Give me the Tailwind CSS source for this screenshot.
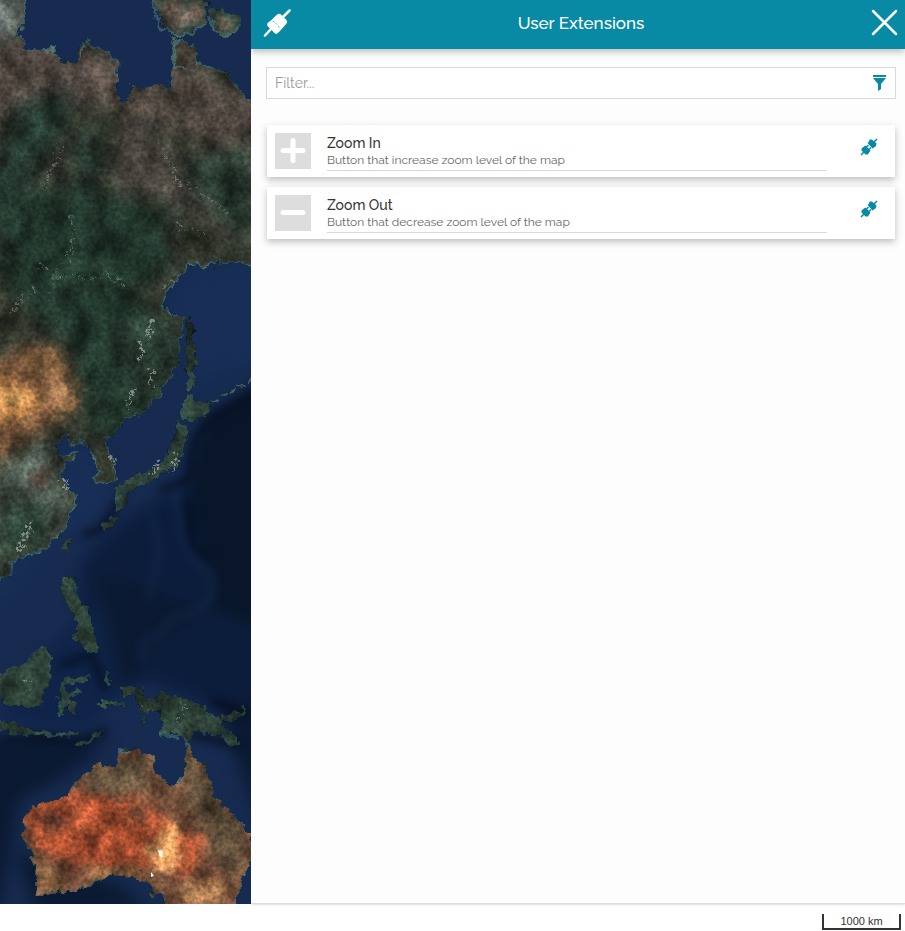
<!DOCTYPE html>
<html lang="en">
<head>
<meta charset="utf-8">
<meta name="viewport" content="width=device-width, initial-scale=1">
<title>User Extensions</title>
<script src="https://cdn.jsdelivr.net/npm/@tailwindcss/browser@4"></script>
</head>
<body class="flex min-h-screen flex-col bg-white font-[Raleway,Lato,sans-serif] text-[#333]">
<svg class="hidden" aria-hidden="true">
  <symbol id="plug" viewBox="0 0 18 18">
    <path d="M1 17 4 14M17 1l-3 3M6.500 9 8.500 7M9 11.500l2-2" stroke="currentColor" stroke-width="1.500" fill="none"/>
    <path d="M1.500 10.500 4 8.500l1.500-1L10.500 12.500 9.500 14 8 16.500 5.500 16.500 1.500 12.500z" fill="currentColor"/>
    <path d="M7.500 5 9 3.500 9.500 1.500 12 1.500 16.500 5.500 16 8 14 9.500 12.500 10.500z" fill="currentColor"/>
  </symbol>
</svg>
<main class="flex flex-1">
  <div class="relative w-[251px] shrink-0 overflow-hidden bg-[#12264b]">
    <svg class="absolute inset-0 h-full w-full" viewBox="0 0 251 904" preserveAspectRatio="xMidYMid slice" role="img" aria-label="Satellite map">
      <defs>
        <filter id="coast" x="-5%" y="-5%" width="110%" height="110%" color-interpolation-filters="sRGB"><feTurbulence type="fractalNoise" baseFrequency=".12" numOctaves="4" seed="4"/><feDisplacementMap in="SourceGraphic" scale="10" xChannelSelector="R" yChannelSelector="G"/></filter>
        <filter id="terrain" filterUnits="userSpaceOnUse" x="0" y="0" width="251" height="904" color-interpolation-filters="sRGB">
          <feTurbulence type="fractalNoise" baseFrequency=".12" numOctaves="4" seed="4"/>
          <feDisplacementMap in="SourceGraphic" scale="11" xChannelSelector="R" yChannelSelector="G" result="shape"/>
          <feTurbulence type="fractalNoise" baseFrequency=".25" numOctaves="4" seed="7"/>
          <feColorMatrix values="1 0 0 0 0  .8 .2 0 0 0  .8 0 .2 0 0  0 0 0 0 1" result="grain"/>
          <feComposite in="shape" in2="grain" operator="arithmetic" k1=".8" k2=".6" result="fine"/>
          <feTurbulence type="fractalNoise" baseFrequency=".045 .035" numOctaves="5" seed="12"/>
          <feColorMatrix values="1 0 0 0 0  1 0 0 0 0  1 0 0 0 0  0 0 0 0 1" result="mottle"/>
          <feComposite in="fine" in2="mottle" operator="arithmetic" k1="1.2" k2=".34"/>
        </filter>
        <filter id="soft" x="-50%" y="-50%" width="200%" height="200%" color-interpolation-filters="sRGB"><feGaussianBlur stdDeviation="8"/></filter>
        <filter id="haze" x="-50%" y="-50%" width="200%" height="200%" color-interpolation-filters="sRGB"><feGaussianBlur stdDeviation="4"/></filter>
        <filter id="speck" x="-20%" y="-20%" width="140%" height="140%" color-interpolation-filters="sRGB"><feTurbulence type="fractalNoise" baseFrequency=".2" numOctaves="3" seed="9"/><feDisplacementMap in="SourceGraphic" scale="16" xChannelSelector="R" yChannelSelector="G"/><feGaussianBlur stdDeviation=".6"/></filter>
        <path id="asia" d="M-9-9H27L25 18 22 28 14 35 24 36 24 50 40 51 48 48 57 55 62 63 78 62 80 45 87 40 93 47 106 50 117 62 116 92 124 105 129 100 132 85 140 90 160 85 170 90 173 72 172 40 182 38 195 48 197 63 225 72 235 85 248 100 261 103V270L240 262 225 262 205 266 190 264 180 275 165 295 160 303 170 312 183 318 181 340 177 365 160 395 140 415 125 418 115 432 104 440 113 460 115 480 105 485 95 480 97 465 88 445 80 440 68 445 70 432 55 447 60 455 77 455 63 467 62 480 75 497 76 505 65 530 45 548 25 557 10 562 10 575-9 582Z"/>
        <path id="isles" d="M150-9H205L207 20 193 35 178 36 166 30 160 17ZM209 12 220 8 240 17 239 29 230 37 215 31ZM190 313l3 17v25l5 7-6 8 3 15-7 5-1-20-1-30 2-20ZM188 393l12 10 13 2-8 10-12 5-13-3 4-12ZM178 420l8 10-3 20-5 15-13 7-15 10-15 5-15 8 5-15 20-7 15-8 10-15 5-15ZM118 485l10 7-3 13-9 5-1-15ZM66 540l6-3-4 16-6-5ZM65 578h10l-1 17 6 8 7 5 9 32 1 10-9 2-8-12h-8l8-15-12-20-7-13ZM-9 676 25 663 42 646 52 658 50 680 40 706 20 706 3 700-9 690ZM62 680l28-5-2 7-23 2v8l17-2-12 7 8 15-6 3-6-13-4 16-4-2 2-21ZM-9 722l29 2 10 6 30 4 20-1v3l-30 1-59-7ZM78 745l24-15-2 6-20 11ZM96 701l30 2-3 4-27-2ZM105 670l6 10-4 6ZM143 712l3 10-4 2ZM122 687l18 1 3 12 22-7 30 9 20 15 25 25-8 3-17-10-15-5-12 10-13-7h-15l5-11-7-10-18-2-5-15-13 2ZM220 716l22-4 2-6 3 5-10 9-16 1ZM102 525l10-8 6 2-12 11Z"/>
        <path id="australia" d="M25 813 30 808 50 802 66 798 75 782 88 772 98 764 116 768 120 750 135 750 153 755 153 770 165 782 178 787 184 780 186 750 189 742 193 757 205 765 212 795 230 812 248 830 251 838V860L240 885 235 912H172L160 893 155 896 150 885 140 878 115 875 90 885 75 892 58 890 48 896 37 895 35 880 36 868 28 845 23 835Z"/>
        <clipPath id="land"><use href="#asia"/><use href="#isles"/><use href="#australia"/></clipPath>
        <clipPath id="oz"><use href="#australia"/></clipPath>
      </defs>
      <rect width="251" height="904" fill="#172b50"/>
      <g filter="url(#soft)">
        <path d="M270 385 205 415 193 460 186 485 130 515 82 560 78 640 105 700 150 680 270 730Z" fill="#0c1d3c"/>
        <path d="M270 375 205 420 190 465 190 520 212 570 215 610 270 630Z" fill="#091629"/>
        <path d="M100 570 210 610 150 650 110 700ZM-20 740 110 742 60 780 20 800 0 910-20 910ZM15 850 35 912H150L120 885ZM215 700 270 710V850Z" fill="#0b1a32"/>
        <path d="M60 445 95 450 118 500 80 535 40 555 0 610-10 580 60 520ZM165 303 190 270 265 260V360L200 380Z" fill="#182e56"/>
        <path d="M45 650 100 600 120 690 90 730 0 720Z" fill="#0f2448"/>
      </g>
      <g fill="none" stroke="#1b3157" stroke-opacity=".4" stroke-width="2" filter="url(#haze)">
        <path d="M174 480 180 530 190 555 211 575 213 590 200 610 170 620 160 635 145 640 140 660M150 510 160 550 148 600M251 378 225 388 205 405" stroke-width="6"/>
        <path d="M122 497 100 530 82 535M255 393 210 420 195 440 188 480 160 490M188 500 192 545 210 560M60 665 92 655 105 690M30 735 80 742M0 740 80 742 108 730M240 745 190 735M250 715 210 700" stroke="#040c1b" stroke-opacity=".7" stroke-width="8"/>
      </g>
      <g filter="url(#terrain)">
        <g stroke="#365b65" stroke-width="2"><use href="#asia" fill="#34392f"/></g>
        <use href="#isles" fill="#30443a" stroke="#294b51"/>
        <use href="#australia" fill="#78533d" stroke="#476561"/>
        <g clip-path="url(#land)">
          <g filter="url(#soft)">
            <path d="M-20 40H60L110 60 190 65 270 110V180L180 130 110 110 30 100-20 140Z" fill="#544b44"/>
            <path d="M20 100 70 90 65 130 35 170 20 220-15 240-15 190ZM130 125 155 120 160 190 125 195ZM85 120 100 160 90 200 75 160Z" fill="#273a31"/>
            <path d="M0 200 75 185 165 210 170 270 130 290 190 350 130 440 90 430 70 350 0 280Z" fill="#24392e"/>
            <path d="M75 100 120 105 115 190 170 200 235 240 240 215 180 165 150 120Z" fill="#48443e"/>
            <path d="M180 170 251 140V240L220 220ZM120 320 180 320 170 380 125 410Z" fill="#2b3d33"/>
            <path d="M-20 368 30 345 60 350 80 400 50 425 0 455-20 460Z" fill="#7d5a3e"/>
            <path d="M-20 378 20 385 40 402 20 418-20 420Z" fill="#eba25a"/>
            <path d="M0 465 55 445 70 500 55 540-10 560Z" fill="#536056"/>
            <path d="M0 510 45 500 50 540 0 560Z" fill="#30483a"/>
            <path d="M-20-10 25-10 20 30-20 50Z" fill="#68706b"/>
          </g>
          <g filter="url(#haze)">
            <ellipse cx="5" cy="399" rx="29" ry="13" fill="#f9b268"/><ellipse cx="45" cy="365" rx="15" ry="16" fill="#83613f"/>
            <path d="M45 395 62 380 72 398 80 408 60 414ZM0 440 12 435 5 458 0 460Z" fill="#a07550"/>
            <path d="M35 470 50 465 48 485 30 490Z" fill="#5d4c42"/>
            <path d="M160 0 180 0 182 28 168 28ZM190 3 205 5 200 25 190 20ZM215 15 232 22 230 32 215 25ZM178 48 195 50 192 60 180 60Z" fill="#796458"/>
            <path d="M180 8 190 12 190 25 178 20Z" fill="#b9a99a"/>
          </g>
        </g>
        <g clip-path="url(#oz)">
          <g filter="url(#haze)">
            <path d="M22 808 75 790 110 800 150 805 170 822 165 860 140 870 100 865 65 865 40 850Z" fill="#a64e30"/>
            <path d="M25 818 45 835 55 850 35 850ZM70 790 90 800 85 830 60 830ZM125 798 140 800 145 820 170 820 150 835ZM180 830 205 840 195 870 175 880Z" fill="#c4603c"/>
            <path d="M38 812 62 815 68 828 45 832ZM130 805 150 810 145 825 125 818ZM58 858 85 865 80 885 62 880ZM200 870 215 865 208 885 195 885Z" fill="#6c4432"/>
            <path d="M90 770 150 755 150 785 110 795 85 790ZM188 750 205 775 225 810 245 830 240 880 215 860 205 825 185 800Z" fill="#65533e"/>
            <path d="M172 822 178 818 180 865 162 870 142 850 160 835Z" fill="#f0a968"/>
            <path d="M38 865 60 870 62 885 40 892ZM90 870 135 865 145 875 115 875 90 880ZM175 885 230 880 220 904 180 904Z" fill="#a87a50"/>
          </g>
        </g>
      </g>
      <path d="M158 850 163 851 162 858 159 855ZM151 872 154 876 151 877ZM191 855 193 859" fill="#f8f7fa"/>
      <g fill="none" stroke="#bcc1bb" stroke-opacity=".6" filter="url(#speck)">
        <path d="M162 145 168 163 175 168 172 180 190 188M177 178 182 190M178 222 182 233 192 230 205 235M70 215 75 230 72 245 68 262M40 265 58 278 70 275 90 280 110 275 130 285M12 310 25 295 35 290M45 185 65 140M175 275 162 292M195 188 225 210" stroke-width="2" stroke-opacity=".4" stroke-dasharray="3 4"/>
        <path d="M153 318 148 338M142 345 140 360M152 368 150 385M135 388 128 408" stroke-width="3" stroke-dasharray="8 2"/>
        <path d="M160 460 150 475M176 455 174 470M111 458 113 465M63 477 66 488M30 525 20 550" stroke-width="4" stroke-dasharray="5 2"/>
        <path d="M60 260 50 300" stroke-opacity=".25"/>
        <path d="M185 705 180 725M25 678 30 690M140 707 150 712" stroke-opacity=".6" stroke-dasharray="3 3"/>
      </g>
      <g fill="none" filter="url(#coast)">
        <path d="M213 403 225 396 240 388 255 377" stroke="#4b6256" stroke-width="2" stroke-dasharray="6 4"/>
        <path d="M153 0 160 28 175 35 193 34 205 23M209 16 215 31 229 36 239 27M175 40 174 68 188 67M42 50 55 50M80 60 83 44M118 750 130 751M178 786 184 778M160 733 180 737M186 738 188 748" stroke="#5c8b90" stroke-opacity=".5" stroke-width="2"/>
      </g>
    </svg>
  </div>
  <section class="flex min-w-0 flex-1 flex-col border-b border-[#ddd] bg-[#fdfdfd] shadow-sm">
    <header class="flex h-[49px] items-center justify-between bg-[#088aa5] pr-[7px] pl-3 text-white shadow-[0_3px_7px_rgba(0,0,0,0.25)]">
      <svg class="-mt-1 size-7" viewBox="0 0 28 28" aria-hidden="true">
        <path d="M2 26.500 8 20M19.500 8.500 26.500 1.500" stroke="currentColor" stroke-width="2.500" stroke-linecap="round"/>
        <path d="M4.500 14 8.500 11 14 5.500Q16.500 4 18 5.500L23.500 11Q25 12.500 23.500 14.500L16.500 22.500Q13.500 26 12 24.500L5 17.500Q3.500 16 4.500 14Z" fill="currentColor"/>
        <path d="M9.500 12l2 1M12.500 14l1.500 1.500M15 17l1.500 1.500" stroke="#088aa5" stroke-opacity=".6"/>
      </svg>
      <h1 class="-mt-1 text-[17px] leading-6 font-medium">User Extensions</h1>
      <button type="button" class="-mt-1 size-[27px]" aria-label="Close"><svg viewBox="0 0 27 27" fill="none" stroke="currentColor" stroke-width="2.500" stroke-linecap="round"><path d="M2 2 25 25M25 2 2 25"/></svg></button>
    </header>
    <div class="mr-[9px] ml-[15px] mt-[18px] flex h-8 items-center border border-[#d8dada] bg-white px-2">
      <input type="text" aria-label="Filter" placeholder="Filter..." class="min-w-0 flex-1 text-[14px] leading-5 outline-none placeholder:text-[#999]">
      <svg class="h-4 w-[15px] text-[#088aa5]" viewBox="0 0 15 16" fill="currentColor" aria-hidden="true"><path d="M1 0H14V2H1ZM1 3H14L9 9V14L6 16V9Z"/></svg>
    </div>
    <ul class="mt-[26px] mr-[10px] ml-4 flex flex-col gap-[10px]">
      <li class="flex h-[52px] bg-white p-2 shadow-[0_3px_7px_rgba(0,0,0,0.25)]">
        <svg class="size-9 shrink-0 bg-[#ddd]" viewBox="0 0 36 36" stroke="#fff" stroke-width="5" stroke-linecap="round" aria-hidden="true"><path d="M8 17.500H28M18 7.500V27.500"/></svg>
        <div class="ml-4 h-[38px] min-w-0 flex-1 border-b border-[#d8dada] pt-[2px]">
          <h2 class="text-[14px] leading-[17px] font-medium">Zoom In</h2>
          <p class="text-[12px] leading-[17px] text-[#666]">Button that increase zoom level of the map</p>
        </div>
        <button type="button" class="mt-[5px] mr-[9px] ml-[33px] size-[18px] text-[#088aa5]" aria-label="Toggle Zoom In"><svg class="size-[18px]"><use href="#plug"/></svg></button>
      </li>
      <li class="flex h-[52px] bg-white p-2 shadow-[0_3px_7px_rgba(0,0,0,0.25)]">
        <svg class="size-9 shrink-0 bg-[#ddd]" viewBox="0 0 36 36" stroke="#fff" stroke-width="5" stroke-linecap="round" aria-hidden="true"><path d="M8 17.500H28"/></svg>
        <div class="ml-4 h-[38px] min-w-0 flex-1 border-b border-[#d8dada] pt-[2px]">
          <h2 class="text-[14px] leading-[17px] font-medium">Zoom Out</h2>
          <p class="text-[12px] leading-[17px] text-[#666]">Button that decrease zoom level of the map</p>
        </div>
        <button type="button" class="mt-[5px] mr-[9px] ml-[33px] size-[18px] text-[#088aa5]" aria-label="Toggle Zoom Out"><svg class="size-[18px]"><use href="#plug"/></svg></button>
      </li>
    </ul>
  </section>
</main>
<footer class="flex h-[27px] items-end justify-end px-1 pb-px">
  <div class="h-4 w-[79px] border-2 border-t-0 border-[#333] text-center font-['Liberation_Sans',Arial,sans-serif] text-[11px] leading-[14px]">1000 km</div>
</footer>
</body>
</html>
